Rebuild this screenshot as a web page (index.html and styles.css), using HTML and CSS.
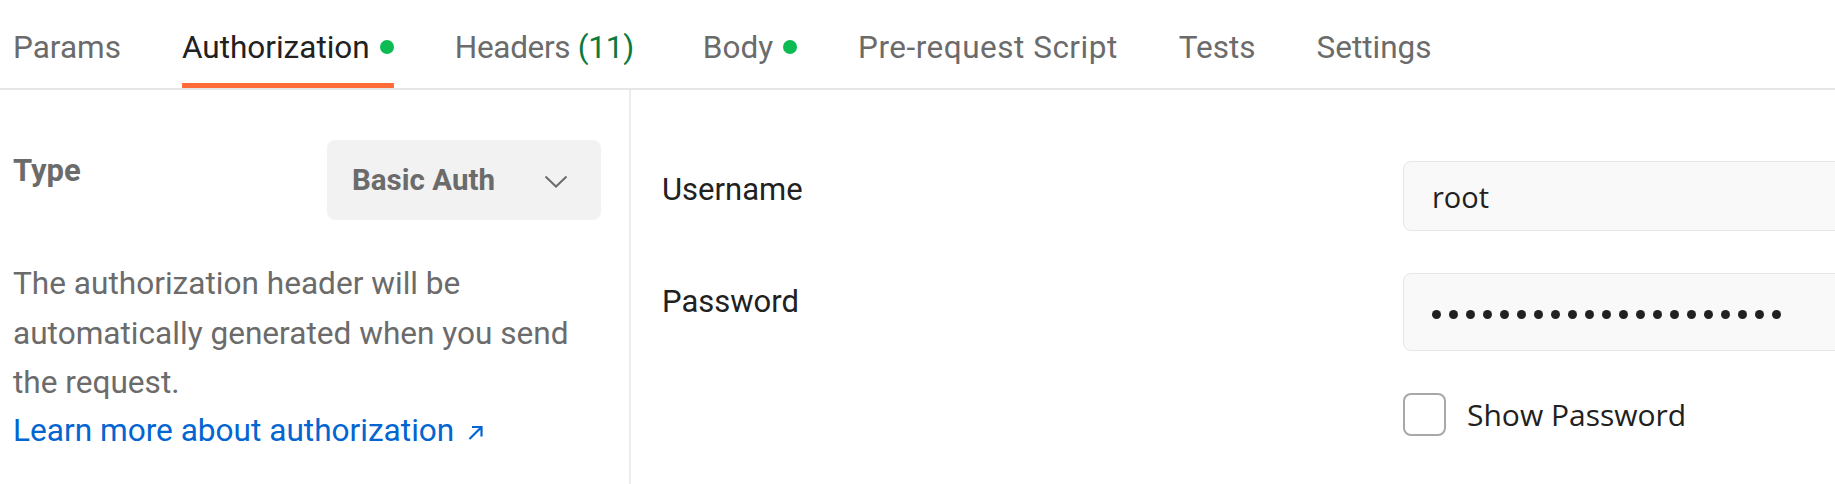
FILE: index.html
```html
<!DOCTYPE html>
<html>
<head>
<meta charset="utf-8">
<link rel="stylesheet" href="styles.css">
</head>
<body>
<div class="tabs">
  <div class="tab">Params</div>
  <div class="tab active">Authorization<span class="dot"></span></div>
  <div class="tab tab-headers">Headers <span class="count">(11)</span></div>
  <div class="tab">Body<span class="dot"></span></div>
  <div class="tab tab-wide">Pre-request Script</div>
  <div class="tab">Tests</div>
  <div class="tab">Settings</div>
</div>
<div class="content">
  <div class="left">
    <div class="type-row">
      <div class="type-label">Type</div>
      <div class="select">
        <span>Basic Auth</span>
        <svg class="chev" width="24" height="13" viewBox="0 0 24 13"><polyline points="1.5,1.5 12,11.5 22.5,1.5" fill="none" stroke="#6b6b6b" stroke-width="2"/></svg>
      </div>
    </div>
    <p class="desc">The authorization header will be automatically generated when you send the request.</p>
    <a class="learn" href="#">Learn more about authorization <svg class="arrow" width="17" height="17" viewBox="0 0 17 17"><path d="M2.5 15 L14 3.5 M5 3 H14.5 V12.5" fill="none" stroke="#0265d2" stroke-width="2.2"/></svg></a>
  </div>
  <div class="right">
    <div class="fields">
      <div class="label">Username</div>
      <div class="input user">root</div>
      <div class="label">Password</div>
      <div class="input pw">
        <span class="bullet"></span><span class="bullet"></span><span class="bullet"></span><span class="bullet"></span><span class="bullet"></span><span class="bullet"></span><span class="bullet"></span><span class="bullet"></span><span class="bullet"></span><span class="bullet"></span><span class="bullet"></span><span class="bullet"></span><span class="bullet"></span><span class="bullet"></span><span class="bullet"></span><span class="bullet"></span><span class="bullet"></span><span class="bullet"></span><span class="bullet"></span><span class="bullet"></span><span class="bullet"></span>
      </div>
      <div class="spacer"></div>
      <div class="check"><span class="box"></span><span class="check-text">Show Password</span></div>
    </div>
  </div>
</div>
</body>
</html>
```
FILE: styles.css
```css
html, body {
  margin: 0;
  padding: 0;
  background: #ffffff;
  overflow: hidden;
}
body {
  font-family: Roboto, "Liberation Sans", sans-serif;
  width: 1835px;
  height: 484px;
}
.tabs {
  display: flex;
  gap: 61px;
  padding-left: 13px;
  border-bottom: 2px solid #e6e6e6;
}
.tab {
  display: flex;
  align-items: center;
  font-size: 31.5px;
  line-height: 32px;
  color: #6b6b6b;
  padding-top: 32px;
  padding-bottom: 19px;
  border-bottom: 5px solid transparent;
  white-space: pre;
}
.tab-headers {
  margin-right: 8px;
  letter-spacing: -0.3px;
}
.tab-wide {
  letter-spacing: 0.5px;
}
.tab.active {
  color: #212121;
  border-bottom-color: #ff6c37;
}
.count {
  color: #0a7a3e;
}
.dot {
  display: inline-block;
  width: 14px;
  height: 14px;
  border-radius: 50%;
  background: #0cbb52;
  margin-left: 10px;
  margin-top: -2px;
}
.content {
  display: flex;
  height: 394px;
}
.left {
  width: 616px;
  padding-left: 13px;
  border-right: 2px solid #ececec;
  padding-top: 50px;
  box-sizing: content-box;
}
.type-row {
  display: flex;
  justify-content: space-between;
  align-items: flex-start;
  padding-right: 28px;
}
.type-label {
  font-size: 31px;
  font-weight: 700;
  color: #6b6b6b;
  line-height: 37px;
  padding-top: 12px;
}
.select {
  width: 274px;
  height: 80px;
  box-sizing: border-box;
  background: #f2f2f2;
  border-radius: 8px;
  display: flex;
  align-items: center;
  justify-content: space-between;
  padding: 0 33px 0 25px;
  font-size: 29.5px;
  font-weight: 700;
  color: #6b6b6b;
}
.chev {
  display: block;
  margin-top: 2px;
}
.desc {
  margin: 39px 0 0 0;
  width: 590px;
  font-size: 31.6px;
  line-height: 49.5px;
  color: #6b6b6b;
}
.learn {
  display: block;
  margin-top: -2px;
  font-size: 31.6px;
  line-height: 49px;
  color: #0265d2;
  text-decoration: none;
}
.arrow {
  vertical-align: 0px;
  margin-left: 5px;
}
.right {
  flex: 1;
  overflow: hidden;
  padding-left: 31px;
  padding-top: 71px;
}
.fields {
  display: grid;
  grid-template-columns: 741px 1fr;
  row-gap: 42px;
  align-items: start;
}
.label {
  font-size: 31px;
  line-height: 37px;
  color: #212121;
  padding-top: 10px;
}
.input {
  box-sizing: border-box;
  width: calc(100% + 20px);
  background: #f9f9f9;
  border: 1px solid #e6e6e6;
  border-radius: 8px;
  display: flex;
  align-items: center;
  padding-left: 28px;
}
.input.user {
  height: 70px;
  font-family: "Open Sans", sans-serif;
  font-size: 29px;
  color: #212121;
}
.input.pw {
  height: 78px;
  gap: 8px;
  padding-top: 4px;
}
.bullet {
  display: block;
  width: 9px;
  height: 9px;
  border-radius: 50%;
  background: #212121;
}
.check {
  display: flex;
  align-items: center;
  gap: 21px;
  font-family: "Open Sans", sans-serif;
  font-size: 30px;
  color: #212121;
}
.box {
  display: block;
  width: 43px;
  height: 43px;
  box-sizing: border-box;
  border: 2px solid #a8a8a8;
  border-radius: 8px;
  background: #fff;
}
```
